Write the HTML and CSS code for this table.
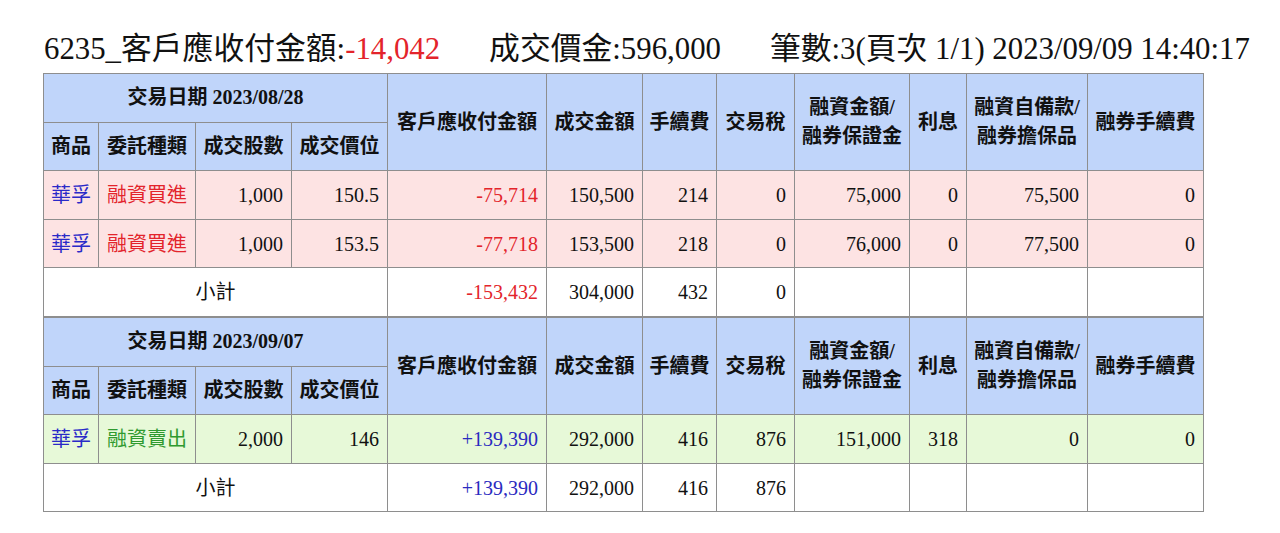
FILE: index.html
```html
<!DOCTYPE html>
<html lang="zh-Hant">
<head>
<meta charset="utf-8">
<title>6235 客戶應收付金額</title>
<link rel="stylesheet" href="styles.css">
</head>
<body>
<div class="page">
  <div class="title">
    <span class="t-item">6235_客戶應收付金額:<span class="neg">-14,042</span></span>
    <span class="t-item">成交價金:596,000</span>
    <span class="t-item">筆數:3(頁次 1/1) 2023/09/09 14:40:17</span>
  </div>

  <table class="trades">
    <colgroup>
      <col class="c1"><col class="c2"><col class="c3"><col class="c4"><col class="c5"><col class="c6">
      <col class="c7"><col class="c8"><col class="c9"><col class="c10"><col class="c11"><col class="c12">
    </colgroup>
    <thead>
      <tr>
        <th colspan="4" class="date">交易日期 2023/08/28</th>
        <th rowspan="2">客戶應收付金額</th>
        <th rowspan="2">成交金額</th>
        <th rowspan="2">手續費</th>
        <th rowspan="2">交易稅</th>
        <th rowspan="2">融資金額/<br>融券保證金</th>
        <th rowspan="2">利息</th>
        <th rowspan="2">融資自備款/<br>融券擔保品</th>
        <th rowspan="2">融券手續費</th>
      </tr>
      <tr>
        <th>商品</th><th>委託種類</th><th>成交股數</th><th>成交價位</th>
      </tr>
    </thead>
    <tbody>
      <tr class="buy">
        <td class="ctr stock">華孚</td><td class="ctr kind-buy">融資買進</td>
        <td>1,000</td><td>150.5</td><td class="red">-75,714</td><td>150,500</td><td>214</td><td>0</td>
        <td>75,000</td><td>0</td><td>75,500</td><td>0</td>
      </tr>
      <tr class="buy">
        <td class="ctr stock">華孚</td><td class="ctr kind-buy">融資買進</td>
        <td>1,000</td><td>153.5</td><td class="red">-77,718</td><td>153,500</td><td>218</td><td>0</td>
        <td>76,000</td><td>0</td><td>77,500</td><td>0</td>
      </tr>
      <tr class="sub">
        <td colspan="4" class="ctr">小計</td>
        <td class="red">-153,432</td><td>304,000</td><td>432</td><td>0</td>
        <td></td><td></td><td></td><td></td>
      </tr>
    </tbody>
  </table>

  <table class="trades">
    <colgroup>
      <col class="c1"><col class="c2"><col class="c3"><col class="c4"><col class="c5"><col class="c6">
      <col class="c7"><col class="c8"><col class="c9"><col class="c10"><col class="c11"><col class="c12">
    </colgroup>
    <thead>
      <tr>
        <th colspan="4" class="date">交易日期 2023/09/07</th>
        <th rowspan="2">客戶應收付金額</th>
        <th rowspan="2">成交金額</th>
        <th rowspan="2">手續費</th>
        <th rowspan="2">交易稅</th>
        <th rowspan="2">融資金額/<br>融券保證金</th>
        <th rowspan="2">利息</th>
        <th rowspan="2">融資自備款/<br>融券擔保品</th>
        <th rowspan="2">融券手續費</th>
      </tr>
      <tr>
        <th>商品</th><th>委託種類</th><th>成交股數</th><th>成交價位</th>
      </tr>
    </thead>
    <tbody>
      <tr class="sell">
        <td class="ctr stock">華孚</td><td class="ctr kind-sell">融資賣出</td>
        <td>2,000</td><td>146</td><td class="blue">+139,390</td><td>292,000</td><td>416</td><td>876</td>
        <td>151,000</td><td>318</td><td>0</td><td>0</td>
      </tr>
      <tr class="sub">
        <td colspan="4" class="ctr">小計</td>
        <td class="blue">+139,390</td><td>292,000</td><td>416</td><td>876</td>
        <td></td><td></td><td></td><td></td>
      </tr>
    </tbody>
  </table>
</div>
</body>
</html>
```

FILE: styles.css
```css
html, body {
  margin: 0;
  padding: 0;
  background: #ffffff;
}

body {
  font-family: "Liberation Serif", "Noto Sans CJK TC", serif;
  color: #111111;
}

.page {
  padding: 29px 0 0 43px;
}

.title {
  display: flex;
  gap: 49px;
  font-size: 30.8px;
  line-height: 40px;
  height: 40px;
  margin: 0 0 4px 1px;
  white-space: nowrap;
}

.neg {
  color: #e3242b;
}

.trades {
  border-collapse: collapse;
  table-layout: fixed;
  width: 1160px;
  font-size: 20px;
}

.c1 { width: 55px; }
.c2 { width: 97px; }
.c3 { width: 96px; }
.c4 { width: 96px; }
.c5 { width: 159px; }
.c6 { width: 96px; }
.c7 { width: 74px; }
.c8 { width: 78px; }
.c9 { width: 115px; }
.c10 { width: 57px; }
.c11 { width: 121px; }
.c12 { width: 116px; }

.trades th,
.trades td {
  border: 1px solid #8e8e8e;
  height: 48.6px;
  padding: 0 8px;
  box-sizing: border-box;
  vertical-align: middle;
  white-space: nowrap;
}

.trades th {
  background: #c0d5fa;
  font-weight: bold;
  text-align: center;
  line-height: 29px;
  padding: 0 2px;
}

.trades td {
  text-align: right;
  line-height: 1.2;
}

.trades td.ctr {
  text-align: center;
  padding: 0 4px;
}

.buy td {
  background: #fde3e3;
}

.sell td {
  background: #e7f9d8;
}

.sub td {
  background: #ffffff;
}

.stock {
  color: #2a2ac8;
}

.kind-buy {
  color: #e3242b;
}

.kind-sell {
  color: #2f9a2f;
}

.red {
  color: #e3242b;
}

.blue {
  color: #2a2ac0;
}
```
